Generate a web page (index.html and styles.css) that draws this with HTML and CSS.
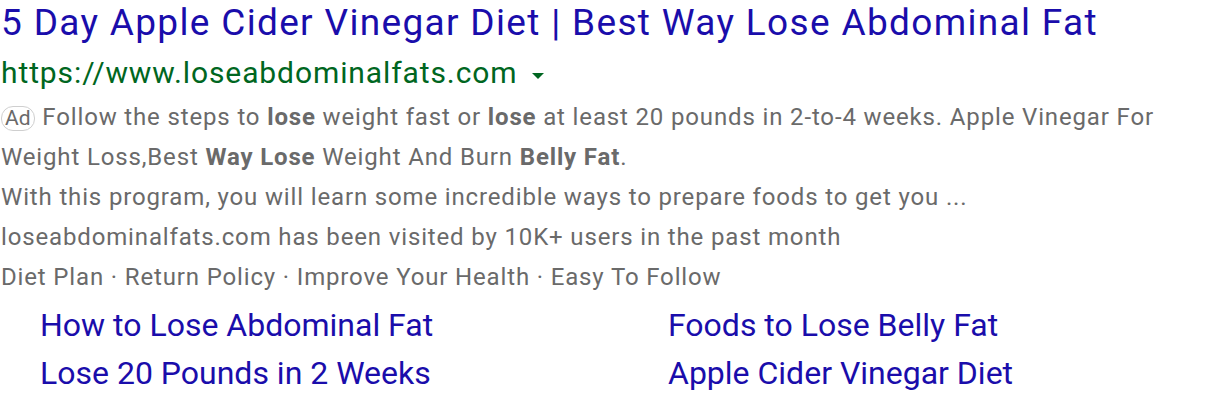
FILE: index.html
```html
<!DOCTYPE html>
<html lang="en">
<head>
<meta charset="utf-8">
<title>Ad result</title>
<link rel="stylesheet" href="styles.css">
</head>
<body>
<div class="result">
  <a class="title" href="#">5 Day Apple Cider Vinegar Diet | Best Way Lose Abdominal Fat</a>
  <div class="url-row">
    <span class="url">https://www.loseabdominalfats.com</span>
    <span class="caret"></span>
  </div>
  <div class="desc">
    <p><span class="ad">Ad</span> Follow the steps to <b>lose</b> weight fast or <b>lose</b> at least 20 pounds in 2-to-4 weeks. Apple Vinegar For Weight Loss,Best <b>Way Lose</b> Weight And Burn <b>Belly Fat</b>.</p>
    <p>With this program, you will learn some incredible ways to prepare foods to get you ...</p>
    <p>loseabdominalfats.com has been visited by 10K+ users in the past month</p>
    <p>Diet Plan · Return Policy · Improve Your Health · Easy To Follow</p>
  </div>
  <div class="sitelinks">
    <a href="#">How to Lose Abdominal Fat</a>
    <a href="#">Foods to Lose Belly Fat</a>
    <a href="#">Lose 20 Pounds in 2 Weeks</a>
    <a href="#">Apple Cider Vinegar Diet</a>
  </div>
</div>
</body>
</html>
```
FILE: styles.css
```css
html, body {
  margin: 0;
  padding: 0;
  background: #fff;
}
body {
  font-family: Roboto, "Liberation Sans", Arial, sans-serif;
}
.result {
  padding-left: 1px;
  width: 1185px;
}
a {
  text-decoration: none;
  color: #1a0dab;
}
.title {
  display: block;
  font-size: 37px;
  line-height: 46px;
  letter-spacing: 1.33px;
  white-space: nowrap;
}
.url-row {
  display: flex;
  align-items: flex-start;
  padding-top: 3px;
  height: 48px;
  gap: 14px;
}
.url {
  font-size: 30px;
  line-height: 48px;
  letter-spacing: 0.9px;
  color: #006621;
}
.caret {
  width: 0;
  height: 0;
  border-left: 6px solid transparent;
  border-right: 6px solid transparent;
  border-top: 6px solid #006621;
  margin-top: 24px;
}
.desc {
  font-size: 24px;
  line-height: 40px;
  letter-spacing: 0.85px;
  color: #6a6a6a;
}
.desc p {
  margin: 0;
}
.desc b {
  font-weight: bold;
}
.ad {
  display: inline-block;
  font-size: 21px;
  line-height: 21px;
  letter-spacing: 0;
  padding: 1px 3px;
  border: 1px solid #cfcfcf;
  border-radius: 12px;
  color: #6a6a6a;
  vertical-align: 0;
  margin-right: 1px;
}
.sitelinks {
  display: grid;
  grid-template-columns: 628px 1fr;
  padding-left: 39px;
  padding-top: 4px;
  font-size: 32px;
  line-height: 48px;
}
```
